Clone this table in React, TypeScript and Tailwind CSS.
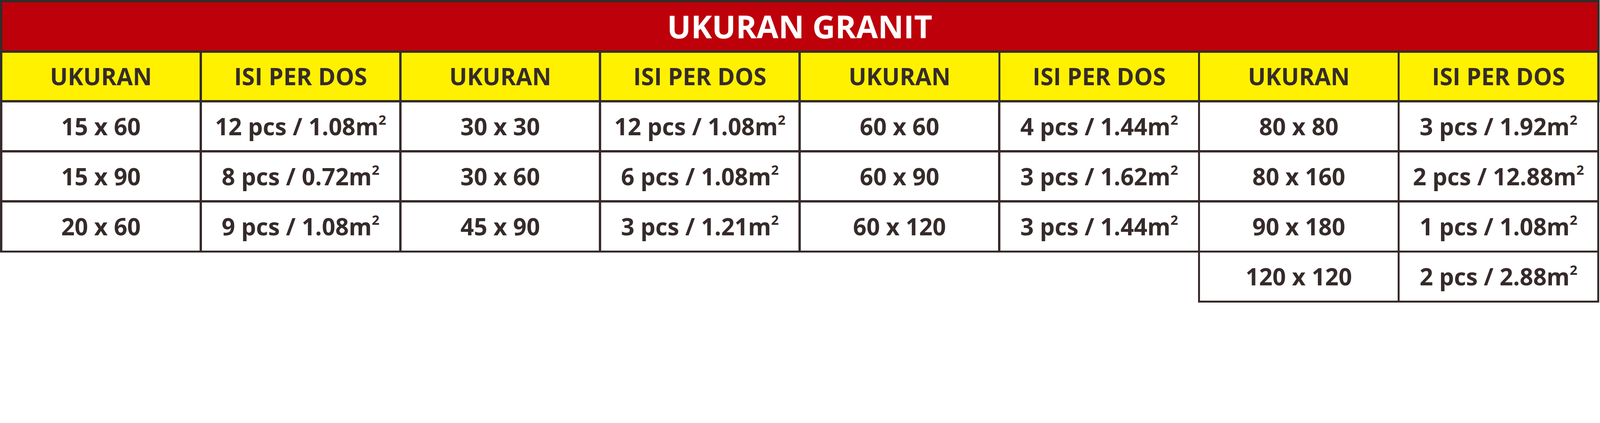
// Sizes are taken from a 5722px wide artwork and expressed as a share of the
// viewport width, so the table fills the window the same way at any width.
const groups: { size: string; isi: string }[][] = [
  [
    { size: "15 x 60", isi: "12 pcs / 1.08m" },
    { size: "15 x 90", isi: "8 pcs / 0.72m" },
    { size: "20 x 60", isi: "9 pcs / 1.08m" },
  ],
  [
    { size: "30 x 30", isi: "12 pcs / 1.08m" },
    { size: "30 x 60", isi: "6 pcs / 1.08m" },
    { size: "45 x 90", isi: "3 pcs / 1.21m" },
  ],
  [
    { size: "60 x 60", isi: "4 pcs / 1.44m" },
    { size: "60 x 90", isi: "3 pcs / 1.62m" },
    { size: "60 x 120", isi: "3 pcs / 1.44m" },
  ],
  [
    { size: "80 x 80", isi: "3 pcs / 1.92m" },
    { size: "80 x 160", isi: "2 pcs / 12.88m" },
    { size: "90 x 180", isi: "1 pcs / 1.08m" },
    { size: "120 x 120", isi: "2 pcs / 2.88m" },
  ],
];

// outer edges of each column group (the last group owns its left line,
// since its extra row hangs below the third group)
const groupPad = [
  "px-[calc(8/5722*100vw)]",
  "pr-[calc(8/5722*100vw)]",
  "",
  "px-[calc(8/5722*100vw)]",
];

const headers = ["UKURAN", "ISI PER DOS", "UKURAN", "ISI PER DOS", "UKURAN", "ISI PER DOS", "UKURAN", "ISI PER DOS"];

export default function App() {
  return (
    <div className="w-screen h-[calc(1082/5722*100vw)] bg-white font-['Open_Sans',sans-serif] font-bold text-[#352b2a] overflow-hidden">
      <div className="w-[calc(5720/5722*100vw)]">
        {/* title */}
        <div className="bg-[#352b2a] p-[calc(8/5722*100vw)]">
          <div className="h-[calc(172/5722*100vw)] bg-[#bd0009] flex items-center justify-center text-white text-[length:calc(113/5722*100vw)] leading-none">
            UKURAN GRANIT
          </div>
        </div>

        {/* header row */}
        <div className="bg-[#352b2a] px-[calc(8/5722*100vw)] pb-[calc(8/5722*100vw)] flex gap-[calc(8/5722*100vw)]">
          {headers.map((h, i) => (
            <div
              key={i}
              className="flex-1 h-[calc(170/5722*100vw)] bg-[#fff100] flex items-center justify-center text-[length:calc(84/5722*100vw)] leading-none"
            >
              {h}
            </div>
          ))}
        </div>

        {/* data */}
        <div className="flex items-start">
          {groups.map((rows, gi) => (
            <div
              key={gi}
              className={`bg-[#352b2a] pb-[calc(8/5722*100vw)] flex flex-col gap-[calc(8/5722*100vw)] ${groupPad[gi]}`}
            >
              {rows.map((r) => (
                <div key={r.size} className="flex gap-[calc(8/5722*100vw)]">
                  <Cell>{r.size}</Cell>
                  <Cell>
                    {r.isi}
                    <span className="relative -top-[0.8em] text-[0.57em] align-baseline">2</span>
                  </Cell>
                </div>
              ))}
            </div>
          ))}
        </div>
      </div>
    </div>
  );
}

function Cell({ children }: { children: React.ReactNode }) {
  return (
    <div className="w-[calc(706/5722*100vw)] h-[calc(171/5722*100vw)] bg-white flex items-center justify-center text-[length:calc(84/5722*100vw)] leading-none whitespace-nowrap">
      <span>{children}</span>
    </div>
  );
}
